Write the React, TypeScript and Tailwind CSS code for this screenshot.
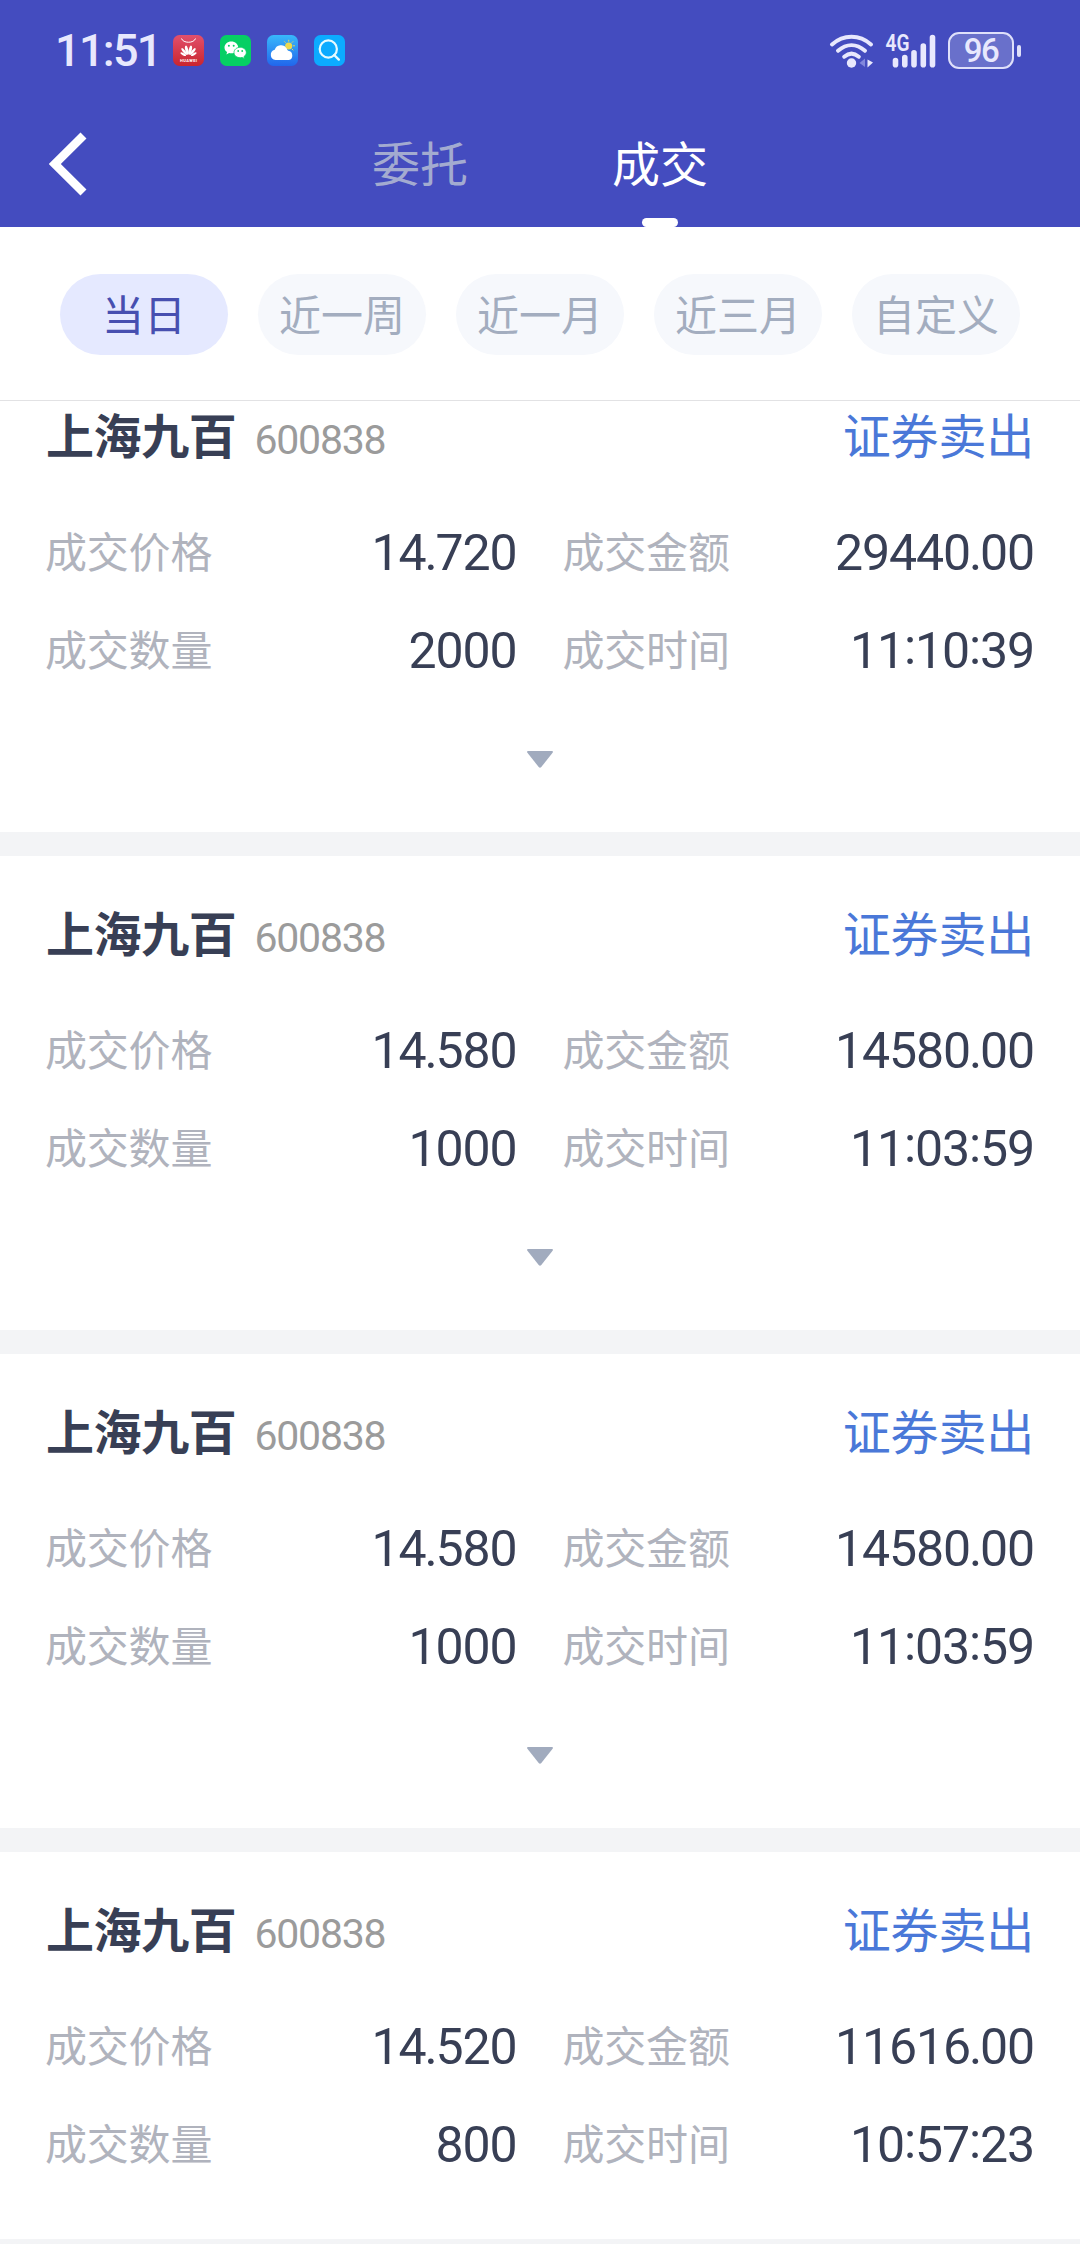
import React from "react";

type Trade = {
  price: string;
  amount: string;
  volume: string;
  time: string;
};

const trades: Trade[] = [
  { price: "14.720", amount: "29440.00", volume: "2000", time: "11:10:39" },
  { price: "14.580", amount: "14580.00", volume: "1000", time: "11:03:59" },
  { price: "14.580", amount: "14580.00", volume: "1000", time: "11:03:59" },
  { price: "14.520", amount: "11616.00", volume: "800", time: "10:57:23" },
];

const ranges = ["当日", "近一周", "近一月", "近三月", "自定义"];

function HuaweiIcon() {
  return (
    <svg width="31" height="31" viewBox="0 0 31 31">
      <defs>
        <linearGradient id="hw" x1="0" y1="0" x2="0" y2="1">
          <stop offset="0" stopColor="#e2506c" />
          <stop offset="1" stopColor="#c9252f" />
        </linearGradient>
      </defs>
      <rect width="31" height="31" rx="6.5" fill="url(#hw)" />
      <path d="M8.5 3.5C10 8.5 21 8.5 22.5 3.5" fill="none" stroke="#fff" strokeWidth="1" />
      <g fill="#fff" transform="translate(15.5 22)">
        <ellipse cx="0" cy="-7" rx="1.5" ry="4.7" transform="rotate(-14)" />
        <ellipse cx="0" cy="-7" rx="1.5" ry="4.7" transform="rotate(14)" />
        <ellipse cx="0" cy="-7" rx="1.3" ry="4.2" transform="rotate(-38)" />
        <ellipse cx="0" cy="-7" rx="1.3" ry="4.2" transform="rotate(38)" />
        <ellipse cx="0" cy="-6" rx="1.1" ry="3.2" transform="rotate(-62)" />
        <ellipse cx="0" cy="-6" rx="1.1" ry="3.2" transform="rotate(62)" />
      </g>
      <text x="7" y="27.2" fontSize="4" fontWeight="700" fill="#fff" fontFamily="Roboto, sans-serif" textLength="17">
        HUAWEI
      </text>
    </svg>
  );
}

function WeChatIcon() {
  return (
    <svg width="31" height="31" viewBox="0 0 31 31">
      <rect width="31" height="31" rx="6.5" fill="#06cf64" />
      <path d="M11.3 6.4c-3.9 0-6.8 2.7-6.8 6 0 2 1 3.6 2.6 4.7l-.7 2.3 2.7-1.4c.7.2 1.4.3 2.2.3 3.9 0 6.9-2.6 6.9-5.9s-3-6-6.9-6z" fill="#fff" />
      <path d="M20.2 12.3c-3.5 0-6.2 2.3-6.2 5.2s2.7 5.2 6.2 5.2c.7 0 1.4-.1 2-.3l2.3 1.3-.6-2c1.5-1 2.4-2.5 2.4-4.2 0-2.9-2.7-5.2-6.1-5.2z" fill="#fff" stroke="#06cf64" strokeWidth="0.8" />
      <circle cx="8.9" cy="10.8" r="1" fill="#06cf64" />
      <circle cx="13.7" cy="10.8" r="1" fill="#06cf64" />
      <circle cx="18.2" cy="16" r=".9" fill="#06cf64" />
      <circle cx="22.2" cy="16" r=".9" fill="#06cf64" />
    </svg>
  );
}

function WeatherIcon() {
  return (
    <svg width="31" height="31" viewBox="0 0 31 31">
      <defs>
        <linearGradient id="sky" x1="0" y1="0" x2="0" y2="1">
          <stop offset="0" stopColor="#38b8fb" />
          <stop offset="1" stopColor="#2166ec" />
        </linearGradient>
      </defs>
      <rect width="31" height="31" rx="6.5" fill="url(#sky)" />
      <circle cx="21.7" cy="11" r="3.6" fill="#ecd94f" />
      <path
        d="M21.7 5.200v1M17.600 6.700l.7.7M25.800 6.700l-.7.7M27.500 10.800h-1M26 15l-.7-.7"
        stroke="#ecd94f"
        strokeWidth="1"
        strokeLinecap="round"
      />
      <path d="M8.5 25a5.200 5.200 0 0 1-.8-10.200 6.600 6.600 0 0 1 12-1.200c.4 1 .7 1.700 1.500 2.200a4.700 4.700 0 0 1 .6 9.200z" fill="#fff" />
    </svg>
  );
}

function SearchIcon() {
  return (
    <svg width="31" height="31" viewBox="0 0 31 31">
      <rect width="31" height="31" rx="6.5" fill="#0cabff" />
      <circle cx="14.3" cy="14" r="8.6" fill="none" stroke="#e6faff" strokeWidth="2.2" />
      <path d="M20.2 20l4.6 4.600" stroke="#e6faff" strokeWidth="2.4" strokeLinecap="round" />
    </svg>
  );
}

function WifiIcon() {
  return (
    <svg width="46" height="36" viewBox="0 0 46 36">
      <g fill="none" stroke="#e8e8fd" strokeWidth="4" strokeLinecap="round">
        <path d="M3 11.5C14.5 1.2 30.5 1.2 42 11.5" />
        <path d="M9 17.8C17.5 10.3 27.5 10.3 36 17.8" />
        <path d="M15.2 23.7C20 19.7 25 19.7 29.8 23.7" />
      </g>
      <circle cx="22.5" cy="30" r="4.7" fill="#e8e8fd" />
      <path d="M36 25.5v8.5l-5.5-4z" fill="#8187dc" />
      <path d="M38.5 26.5v8l5.5-5z" fill="#e8e8fd" />
    </svg>
  );
}

function SignalIcon() {
  return (
    <svg width="51" height="44" viewBox="0 -4 51 44">
      <text x="0.5" y="18" fontSize="23" fontWeight="600" fill="#e8e8fd" fontFamily="Roboto, sans-serif" textLength="24" lengthAdjust="spacingAndGlyphs">
        4G
      </text>
      <path
        d="M10.5 27.5V31.8M19.8 24.5V31.8M29 19.8V31.8M38.3 13V31.8M47.5 4.5V31.8"
        stroke="#e8e8fd"
        strokeWidth="5.6"
        strokeLinecap="round"
      />
    </svg>
  );
}

function Battery() {
  return (
    <div className="flex items-center gap-[3px]">
      <div className="flex h-[37px] w-[66px] items-center justify-center rounded-[11px] border-[2.5px] border-[#dfe0fa] bg-[#6970cb] font-['Roboto',sans-serif] text-[33px] leading-[32px] font-medium tracking-[-1.5px] text-[#e8e8fd]">
        96
      </div>
      <div className="h-[12px] w-[4px] rounded-full bg-[#dfe0fa]" />
    </div>
  );
}

function Digits({ value }: { value: string }) {
  return (
    <span className="flex pt-[7px] pr-[1px] font-['Roboto',sans-serif] text-[50px] leading-[56px] tracking-[-1.1px] text-[#383f55]">
      {value.split(/([:.])/).map((part, i) =>
        part === ":" ? (
          <span key={i} className="-mt-[4px]">:</span>
        ) : part === "." ? (
          <span key={i} className="-mr-[1px] -ml-[1px]">.</span>
        ) : (
          <span key={i}>{part}</span>
        ),
      )}
    </span>
  );
}

function Field({ label, value }: { label: string; value: string }) {
  return (
    <div className="flex h-[98px] items-center justify-between">
      <span className="pt-[2px] text-[42px] leading-[60px] tracking-[-0.2px] text-[#b0b3bd]">{label}</span>
      <Digits value={value} />
    </div>
  );
}

function TradeCard({ trade, expandable }: { trade: Trade; expandable: boolean }) {
  return (
    <article className="bg-white">
      <header className="mb-[35px] flex h-[64px] items-center justify-between px-[46px]">
        <div className="flex items-center">
          <h2 className="text-[48px] leading-[64px] font-bold tracking-[-0.4px] text-[#383f55]">上海九百</h2>
          <span className="ml-[18px] pt-[14px] font-['Roboto',sans-serif] text-[41px] leading-[48px] tracking-[-1.2px] text-[#9b9b9b]">
            600838
          </span>
        </div>
        <span className="text-[48px] leading-[64px] tracking-[-0.2px] text-[#4a78d8]">证券卖出</span>
      </header>
      <div className="grid grid-cols-2 gap-x-[45px] px-[45px]">
        <Field label="成交价格" value={trade.price} />
        <Field label="成交金额" value={trade.amount} />
        <Field label="成交数量" value={trade.volume} />
        <Field label="成交时间" value={trade.time} />
      </div>
      {expandable ? (
        <button className="mx-auto block h-[136px] pt-[55px] pb-[64px]">
          <svg width="26" height="17" viewBox="0 0 26 17">
            <path d="M1 0h24q1.5.3.6 1.8L14.3 16q-1.3 1.4-2.6 0L.4 1.8Q-.5.3 1 0z" fill="#a1abbe" />
          </svg>
        </button>
      ) : (
        <div className="h-[49px]" />
      )}
    </article>
  );
}

export default function App() {
  return (
    <div className="flex h-[2244px] w-[1080px] flex-col overflow-hidden bg-white font-['Noto_Sans_CJK_SC',sans-serif]">
      <div className="h-[227px] shrink-0 bg-[#444cbf]">
        <div className="flex h-[101px] items-center justify-between pr-[59px] pl-[55px]">
          <div className="flex items-center">
            <span className="w-[118px] pt-[1px] font-['Roboto',sans-serif] text-[45px] leading-[52px] font-medium tracking-[-1.7px] text-[#e8e8fd]">
              11:51
            </span>
            <div className="flex gap-4">
              <HuaweiIcon />
              <WeChatIcon />
              <WeatherIcon />
              <SearchIcon />
            </div>
          </div>
          <div className="flex items-center">
            <WifiIcon />
            <span className="mr-[12px] ml-[10px]">
              <SignalIcon />
            </span>
            <Battery />
          </div>
        </div>
        <nav className="flex h-[126px]">
          <button className="w-[300px] pb-[1px] pl-[49px]">
            <svg width="38" height="64" viewBox="0 0 38 64">
              <path d="M34.5 3.5L5.8 32L34.5 60.5" fill="none" stroke="#fff" strokeWidth="8.5" />
            </svg>
          </button>
          <button className="flex w-[240px] justify-center pt-[28px] text-[48px] leading-[64px] text-[#a3abd0]">委托</button>
          <button className="flex w-[240px] flex-col items-center justify-between pt-[28px] text-[48px] leading-[64px] text-white">
            成交
            <span className="h-[9px] w-[36px] rounded-full bg-white" />
          </button>
        </nav>
      </div>
      <div className="flex h-[174px] shrink-0 gap-[30px] border-b border-[#e2e2e4] px-[60px] pt-[47px]">
        {ranges.map((r, i) => (
          <button
            key={r}
            className={
              i === 0
                ? "h-[81px] w-[168px] rounded-full bg-[#e5e9ff] pb-[3px] text-[42px] leading-[76px] text-[#474fb0]"
                : "h-[81px] w-[168px] rounded-full bg-[#f6f8fc] pb-[3px] text-[42px] leading-[76px] text-[#a3adbf]"
            }
          >
            {r}
          </button>
        ))}
      </div>
      <main className="flex flex-1 flex-col gap-[24px] bg-[#f3f4f6]">
        {trades.map((t, i) => (
          <div key={i} className={i === 0 ? "bg-white" : "bg-white pt-[43px]"}>
            <TradeCard trade={t} expandable={i < trades.length - 1} />
          </div>
        ))}
      </main>
    </div>
  );
}
